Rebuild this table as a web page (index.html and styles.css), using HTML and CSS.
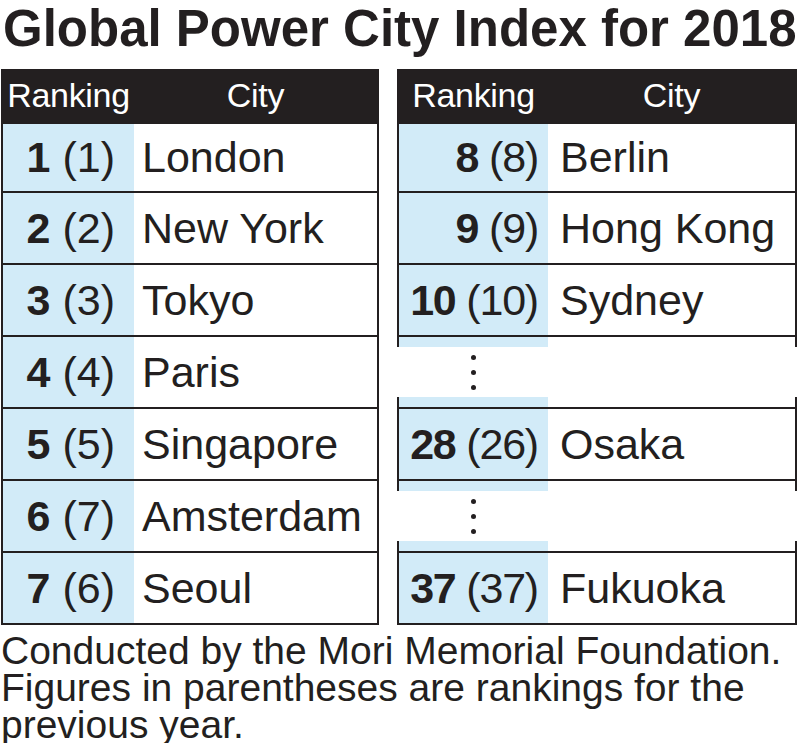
FILE: index.html
```html
<!DOCTYPE html>
<html lang="en">
<head>
<meta charset="utf-8">
<title>Global Power City Index for 2018</title>
<link rel="stylesheet" href="styles.css">
</head>
<body>
<div class="page">
  <h1 class="title">Global Power City Index for 2018</h1>
  <div class="tables">
    <div class="table table--left">
      <div class="head"><div>Ranking</div><div>City</div></div>
      <div class="body">
        <div class="row row--first"><div class="rank"><b>1</b>&nbsp;(1)</div><div class="city">London</div></div>
        <div class="row"><div class="rank"><b>2</b>&nbsp;(2)</div><div class="city">New York</div></div>
        <div class="row"><div class="rank"><b>3</b>&nbsp;(3)</div><div class="city">Tokyo</div></div>
        <div class="row"><div class="rank"><b>4</b>&nbsp;(4)</div><div class="city">Paris</div></div>
        <div class="row"><div class="rank"><b>5</b>&nbsp;(5)</div><div class="city">Singapore</div></div>
        <div class="row"><div class="rank"><b>6</b>&nbsp;(7)</div><div class="city">Amsterdam</div></div>
        <div class="row"><div class="rank"><b>7</b>&nbsp;(6)</div><div class="city">Seoul</div></div>
      </div>
    </div>
    <div class="table table--right">
      <div class="head"><div>Ranking</div><div>City</div></div>
      <div class="body">
        <div class="row row--first"><div class="rank"><b>8</b>&nbsp;(8)</div><div class="city">Berlin</div></div>
        <div class="row"><div class="rank"><b>9</b>&nbsp;(9)</div><div class="city">Hong Kong</div></div>
        <div class="row"><div class="rank"><b>10</b>&nbsp;(10)</div><div class="city">Sydney</div></div>
        <div class="stub"><div class="rank"></div><div></div></div>
      </div>
      <div class="ellipsis"><div class="dots"><span></span><span></span><span></span></div></div>
      <div class="body">
        <div class="stub"><div class="rank"></div><div></div></div>
        <div class="row row--ruled"><div class="rank"><b>28</b>&nbsp;(26)</div><div class="city">Osaka</div></div>
        <div class="stub"><div class="rank"></div><div></div></div>
      </div>
      <div class="ellipsis"><div class="dots"><span></span><span></span><span></span></div></div>
      <div class="body">
        <div class="stub"><div class="rank"></div><div></div></div>
        <div class="row row--ruled"><div class="rank"><b>37</b>&nbsp;(37)</div><div class="city">Fukuoka</div></div>
      </div>
    </div>
  </div>
  <p class="note">Conducted by the Mori Memorial Foundation.<br>Figures in parentheses are rankings for the previous year.</p>
</div>
</body>
</html>
```

FILE: styles.css
```css
* { box-sizing: border-box; }

body {
  margin: 0;
  background: #ffffff;
  color: #231f20;
  font-family: "Liberation Sans", Arial, sans-serif;
}

.page {
  padding: 3px 1px 0 1px;
}

.title {
  margin: 0;
  padding-left: 2px;
  font-size: 51px;
  line-height: 51px;
  font-weight: bold;
  white-space: nowrap;
}

.tables {
  display: flex;
  align-items: flex-start;
  gap: 18px;
  margin-top: 15px;
}

.table--left {
  width: 378px;
  --rank: 131px;
  --rank-pad: 19px;
  --rank-track: 0px;
  --city-pad: 8px;
}

.table--right {
  width: 400px;
  --rank: 149px;
  --rank-pad: 10px;
  --rank-track: -1.2px;
  --city-pad: 12px;
}

.head {
  display: grid;
  grid-template-columns: var(--rank) 1fr;
  height: 55px;
  padding: 0 2px 2px;
  background: #231f20;
  color: #ffffff;
  font-size: 34px;
  line-height: 53px;
  text-align: center;
  letter-spacing: -0.3px;
}

.body {
  border-left: 2px solid #231f20;
  border-right: 2px solid #231f20;
}

.row {
  display: grid;
  grid-template-columns: var(--rank) 1fr;
  height: 72px;
  border-bottom: 2px solid #231f20;
  font-size: 43px;
  white-space: nowrap;
}

.row--first {
  height: 69px;
}

.row--ruled {
  height: 74px;
  border-top: 2px solid #231f20;
}

.rank {
  display: flex;
  align-items: center;
  justify-content: flex-end;
  padding-right: var(--rank-pad);
  background: #d2ebf8;
  letter-spacing: var(--rank-track);
}

.rank b {
  font-weight: bold;
}

.city {
  display: flex;
  align-items: center;
  padding-left: var(--city-pad);
}

.stub {
  display: grid;
  grid-template-columns: var(--rank) 1fr;
  height: 10px;
}

.ellipsis {
  display: grid;
  grid-template-columns: var(--rank) 1fr;
  height: 50px;
  padding: 0 2px;
}

.dots {
  display: flex;
  flex-direction: column;
  align-items: center;
  justify-content: center;
  gap: 10px;
}

.dots span {
  width: 5px;
  height: 5px;
  border-radius: 50%;
  background: #231f20;
}

.note {
  margin: 7px 0 0;
  font-size: 39px;
  line-height: 37px;
}
```
